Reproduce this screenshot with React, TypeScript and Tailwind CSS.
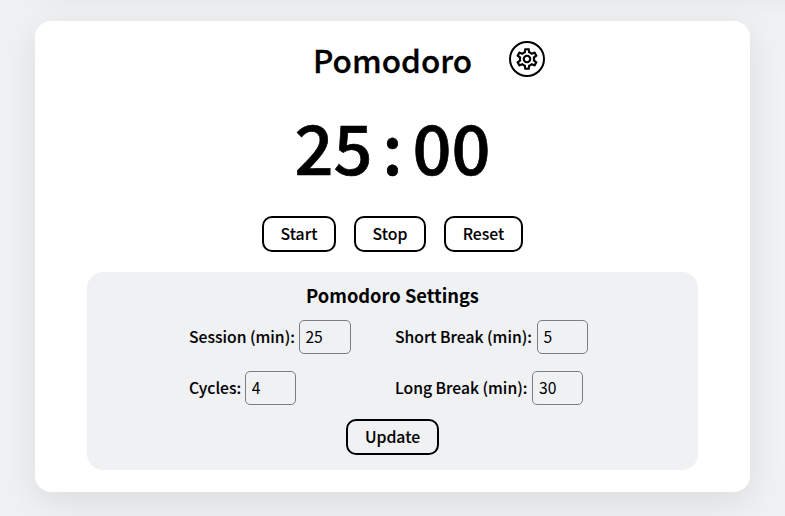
import React from "react";
import { MdOutlineSettings } from "react-icons/md";

function PillButton({ children, width }: { children: React.ReactNode; width: string }) {
  return (
    <button className={`flex h-9 items-center justify-center rounded-[10px] border-2 border-black pb-px text-[15.800px] leading-[15px] font-medium [-webkit-text-stroke:0.1px_black] ${width}`}>
      {children}
    </button>
  );
}

function Field({ label, value, width = "w-[51px]", gap = "gap-1" }: { label: string; value: string; width?: string; gap?: string }) {
  return (
    <label className={`flex h-[34px] items-center ${gap}`}>
      <span className="pb-px text-[15.700px] leading-[15px] font-medium whitespace-nowrap [-webkit-text-stroke:0.1px_black]">{label}</span>
      <input className={`h-[34px] rounded-[5px] border border-[#7d7d80] bg-transparent pb-[2px] pl-[5.500px] text-[15.700px] leading-none font-normal ${width}`} defaultValue={value} />
    </label>
  );
}

export default function App() {
  return (
    <main className="h-[516px] w-full overflow-hidden bg-[#eff1f3] font-['Noto_Sans_CJK_JP',sans-serif] text-black">
      <div className="-mt-[200px] ml-[35px] h-[180px] w-[900px] rounded-2xl shadow-[0_10px_36px_rgba(0,0,0,0.09)]" />
      <section className="mt-[41px] ml-[35px] flex h-[471px] w-[715px] flex-col items-center rounded-2xl bg-white shadow-[0_10px_36px_rgba(0,0,0,0.09)]">
        <header className="mt-5 flex h-9 w-full items-center pl-[278px]">
          <h1 className="w-[196px] pt-[2px] text-[31.500px] leading-none font-medium [-webkit-text-stroke:0.3px_black]">Pomodoro</h1>
          <button className="flex size-9 items-center justify-center rounded-full border-2 border-black" aria-label="Settings">
            <MdOutlineSettings className="size-[26px]" />
          </button>
        </header>
        <div className="mt-[31px] flex h-[72px] items-center pt-1 text-[68.500px] leading-none font-medium [-webkit-text-stroke:0.7px_black]">
          <span>25</span>
          <span className="w-[40px] text-center">:</span>
          <span>00</span>
        </div>
        <div className="mt-9 flex gap-[18px]">
          <PillButton width="w-[74px]">Start</PillButton>
          <PillButton width="w-[72px]">Stop</PillButton>
          <PillButton width="w-[79px]">Reset</PillButton>
        </div>
        <div className="mt-5 flex h-[198px] w-[611px] flex-col items-center rounded-2xl bg-[#eff1f3]">
          <h2 className="mt-[13px] text-[18.300px] leading-5 font-bold">Pomodoro Settings</h2>
          <div className="mt-[15px] grid w-full grid-cols-[206px_1fr] gap-y-[17px] pl-[102px]">
            <Field label="Session (min):" value="25" width="w-[52px]" />
            <Field label="Short Break (min):" value="5" gap="gap-[5px]" />
            <Field label="Cycles:" value="4" />
            <Field label="Long Break (min):" value="30" gap="gap-[5px]" />
          </div>
          <div className="mt-[14px]">
            <PillButton width="w-[93px]">Update</PillButton>
          </div>
        </div>
      </section>
    </main>
  );
}
